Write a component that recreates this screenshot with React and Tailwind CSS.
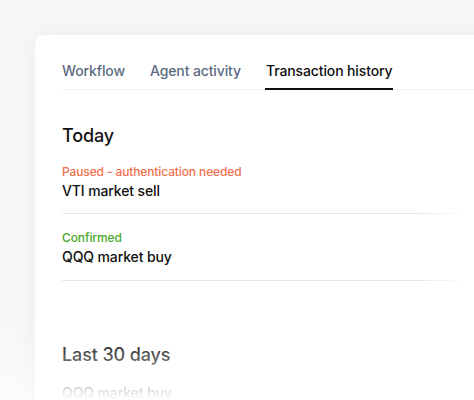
const tabs = ["Workflow", "Agent activity", "Transaction history"];

const today = [
  { status: "Paused - authentication needed", color: "text-[#f0704f]", title: "VTI market sell", pad: "pt-[14px] pb-[13px]" },
  { status: "Confirmed", color: "text-[#4aa82a]", title: "QQQ market buy", pad: "pt-[16px] pb-[14px]" },
];

export default function App() {
  return (
    <div
      className="relative w-[474px] h-[400px] overflow-hidden bg-[#f7f7f7] pt-[35px] pl-[35px]"
      style={{ fontFamily: "Inter, 'Noto Sans', sans-serif" }}
    >
      <div className="relative w-[480px] h-[400px] bg-white rounded-tl-[10px] shadow-[0_0_24px_rgba(0,0,0,0.05)] pl-[27px] pt-[26px] tracking-[-0.12px]">
        {/* Tabs */}
        <div className="flex gap-[25px] border-b border-[#f0f0f0] text-[14px] leading-[20px] font-medium">
          {tabs.map((t, i) => (
            <div
              key={t}
              className={`pb-[7px] -mb-px border-b-2 ${
                i === 2 ? "border-[#111] text-[#111] px-px -mx-px" : "border-transparent text-[#5b6b80]"
              }`}
            >
              {t}
            </div>
          ))}
        </div>

        <h2 className="mt-[32px] text-[18px] leading-[28px] font-medium text-[#111]">Today</h2>

        <div className="w-[420px]">
          {today.map((row) => (
            <div key={row.title} className={`${row.pad} relative`}>
              <p className={`text-[12px] leading-[16px] font-medium ${row.color}`}>{row.status}</p>
              <p className="mt-px text-[14px] leading-[20px] font-medium text-[#111]">{row.title}</p>
              <div className="absolute left-0 bottom-0 h-px w-[405px] bg-gradient-to-r from-[#e8e8e8] from-[88%] to-transparent" />
            </div>
          ))}
        </div>

        <h2 className="mt-[60px] text-[18px] leading-[28px] font-medium text-[#111]">Last 30 days</h2>
        <p className="mt-[14px] text-[14px] leading-[20px] font-medium text-[#111]">QQQ market buy</p>
      </div>

      {/* bottom fade */}
      <div className="absolute left-[35px] right-0 bottom-0 h-[62px] bg-gradient-to-b from-white/0 to-white" />
      <div className="absolute left-0 w-[35px] bottom-0 h-[80px] bg-gradient-to-b from-white/0 to-white/60" />
    </div>
  );
}
